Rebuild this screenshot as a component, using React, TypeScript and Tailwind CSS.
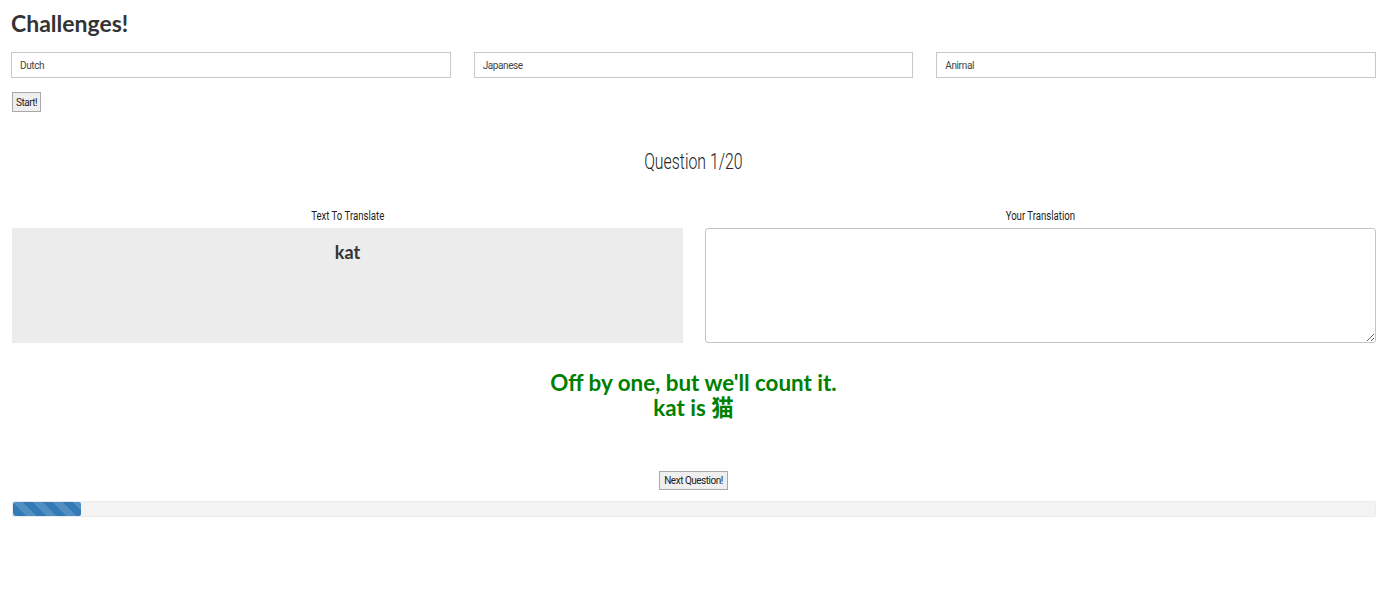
const narrow = "font-['Roboto','Liberation_Sans',sans-serif]";

const pairs = ["Dutch", "Japanese", "Animal"];

function Squeezed({ text, className, squeeze }: { text: string; className: string; squeeze: string }) {
  return (
    <div className={`text-center ${narrow} ${className}`}>
      <span className={`inline-block origin-center ${squeeze}`}>{text}</span>
    </div>
  );
}

export default function App() {
  return (
    <div className="bg-white text-[#333] w-full min-h-[601px] pl-[11px] pr-[15px]">
      <h1 className="font-['Lato',sans-serif] font-bold text-[23px] leading-[26px] pt-[10px]">
        Challenges!
      </h1>

      <div className="grid grid-cols-3 gap-x-[23px] mt-[16px]">
        {pairs.map((p) => (
          <input
            key={p}
            defaultValue={p}
            className={`h-[26px] border border-[#c8c8c8] px-[8px] text-[10px] tracking-[-0.4px] text-[#444] outline-none ${narrow}`}
          />
        ))}
      </div>

      <button
        className={`mt-[14px] ml-px h-[20px] px-[3px] border border-[#a9a9a9] bg-[#efefef] text-[10px] tracking-[-0.5px] text-[#222] ${narrow}`}
      >
        Start!
      </button>

      <Squeezed
        text="Question 1/20"
        squeeze="scale-x-[0.72]"
        className="text-[22px] font-light text-[#222] mt-[37px] leading-[26px]"
      />

      <div className="grid grid-cols-2 gap-x-[22px] mt-[33px] pl-px">
        <div className="flex flex-col">
          <Squeezed
            text="Text To Translate"
            squeeze="scale-x-[0.8]"
            className="text-[12px] text-[#222] leading-[16px] mb-[4px]"
          />
          <div className="bg-[#ececec] h-[115px] text-center font-['Lato',sans-serif] font-bold text-[18px] pt-[13px] leading-[22px]">
            kat
          </div>
        </div>
        <div className="flex flex-col">
          <Squeezed
            text="Your Translation"
            squeeze="scale-x-[0.8]"
            className="text-[12px] text-[#222] leading-[16px] mb-[4px]"
          />
          <textarea className="h-[115px] border border-[#c4c4c4] rounded-[3px] outline-none resize-y" />
        </div>
      </div>

      <div className="text-center text-[#008000] font-['Lato','Noto_Sans_CJK_SC',sans-serif] font-bold text-[22.4px] leading-[25px] mt-[27px]">
        <div>Off by one, but we'll count it.</div>
        <div>kat is 猫</div>
      </div>

      <div className="flex justify-center mt-[51px]">
        <button
          className={`h-[19px] px-[4px] border border-[#a9a9a9] bg-[#efefef] text-[10px] tracking-[-0.5px] text-[#222] ${narrow}`}
        >
          Next Question!
        </button>
      </div>

      <div className="mt-[11px] ml-px h-[16px] bg-[#f3f3f3] border border-[#ebebeb] rounded-[2px] overflow-hidden">
        <div className="h-full w-[68px] rounded-[2px] bg-[#337ab7] bg-[linear-gradient(45deg,rgba(255,255,255,0.15)_25%,transparent_25%,transparent_50%,rgba(255,255,255,0.15)_50%,rgba(255,255,255,0.15)_75%,transparent_75%,transparent)] bg-[length:20px_20px]" />
      </div>
    </div>
  );
}
